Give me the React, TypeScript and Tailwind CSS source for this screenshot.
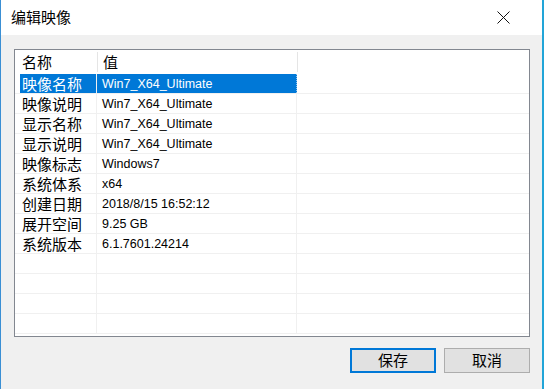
import React from 'react'

const cjk = "font-['Microsoft_YaHei','Noto_Sans_CJK_SC',sans-serif]"
const latin = "font-['Liberation_Sans','Noto_Sans_CJK_SC',sans-serif]"

const rows: [string, string][] = [
    ['映像名称', 'Win7_X64_Ultimate'],
    ['映像说明', 'Win7_X64_Ultimate'],
    ['显示名称', 'Win7_X64_Ultimate'],
    ['显示说明', 'Win7_X64_Ultimate'],
    ['映像标志', 'Windows7'],
    ['系统体系', 'x64'],
    ['创建日期', '2018/8/15 16:52:12'],
    ['展开空间', '9.25 GB'],
    ['系统版本', '6.1.7601.24214'],
    ['', ''],
    ['', ''],
    ['', ''],
    ['', ''],
]

const Row: React.FC<{ label: string; value: string; selected?: boolean }> = ({ label, value, selected }) => (
    <div className="flex h-[20px] border-b border-[#f0f0f0]">
        <div className="w-[82px] flex border-r border-[#f0f0f0]">
            <div className="w-[5px]" />
            <div
                className={`flex-1 flex items-center pl-[2px] text-[15px] leading-none ${cjk} ${
                    selected ? 'bg-[#0078d7] text-white' : 'text-black'
                }`}
            >
                {label}
            </div>
        </div>
        <div
            className={`w-[200px] flex items-center pl-[5px] pt-[2px] text-[12.5px] leading-none border-r ${latin} ${
                selected ? 'bg-[#0078d7] text-white border-dotted border-[#8fc3ee]' : 'text-black border-[#f0f0f0]'
            }`}
        >
            {value}
        </div>
        <div className="flex-1" />
    </div>
)

const App: React.FC = () => {
    return (
        <div className="w-[544px] h-[389px] flex flex-col bg-[#f0f0f0] border-l border-[#3a8fd4] border-r-2 border-r-[#22a5d8] overflow-hidden">
            <div className="h-[35px] bg-white flex items-center justify-between pl-[10px] pr-[32px]">
                <span className={`text-[15px] text-black ${cjk}`}>编辑映像</span>
                <svg width="13" height="13" viewBox="0 0 13 13">
                    <path d="M0.5 0.5 L12.5 12.5 M12.5 0.5 L0.5 12.5" stroke="#111" strokeWidth="1" />
                </svg>
            </div>
            <div className="flex-1 flex flex-col pt-[14px] pl-[13px] pr-[12px]">
                <div className="h-[288px] bg-white border border-[#828790] flex flex-col">
                    <div className="h-[24px] flex">
                        <div className={`w-[82px] flex items-center pl-[7px] text-[15px] text-black ${cjk}`}>名称</div>
                        <div className="w-px my-[2px] bg-[#e5e5e5]" />
                        <div className={`w-[199px] flex items-center pl-[5px] text-[15px] text-black ${cjk}`}>值</div>
                        <div className="w-px my-[2px] bg-[#e5e5e5]" />
                        <div className="flex-1" />
                    </div>
                    {rows.map(([l, v], i) => (
                        <Row key={i} label={l} value={v} selected={i === 0} />
                    ))}
                </div>
                <div className="flex justify-end gap-[8px] mt-[11px]">
                    <button className={`w-[86px] h-[25px] bg-[#e1e1e1] border-2 border-[#0078d7] text-[15px] text-black flex items-center justify-center ${cjk}`}>
                        保存
                    </button>
                    <button className={`w-[86px] h-[25px] bg-[#e1e1e1] border border-[#adadad] text-[15px] text-black flex items-center justify-center ${cjk}`}>
                        取消
                    </button>
                </div>
            </div>
        </div>
    )
}

export default App
